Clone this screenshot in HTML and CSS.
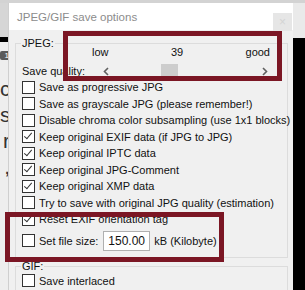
FILE: index.html
```html
<!DOCTYPE html>
<html lang="en">
<head>
    <meta charset="UTF-8">
    <title>JPEG/GIF save options</title>
    <link rel="stylesheet" href="styles.css">
</head>
<body>
    <div class="screen">
        <div class="topline"></div>
        <div class="row">
            <div class="behind-left">
                <div class="bl-top"></div>
                <div class="bl-bar"></div>
                <div class="bl-app">
                    <div class="badge">1</div>
                    <div class="big">c</div>
                    <div class="big">s</div>
                    <div class="big">r</div>
                    <div class="big">,</div>
                </div>
            </div>

            <div class="dialog">
                <div class="titlebar">
                    <span class="title">JPEG/GIF save options</span>
                    <span class="close">&#215;</span>
                </div>
                <div class="body">
                    <div class="group jpeg">
                        <span class="legend">JPEG:</span>
                        <div class="scale">
                            <span>low</span>
                            <span>39</span>
                            <span>good</span>
                        </div>
                        <div class="quality">
                            <span class="qlabel">Save quality:</span>
                            <div class="scrollbar">
                                <span class="arrow">
                                    <svg width="6" height="9" viewBox="0 0 6 9"><path d="M5 1 L1.5 4.5 L5 8" fill="none" stroke="#606060" stroke-width="1.6"/></svg>
                                </span>
                                <div class="track"><div class="thumb"></div></div>
                                <span class="arrow">
                                    <svg width="6" height="9" viewBox="0 0 6 9"><path d="M1 1 L4.5 4.5 L1 8" fill="none" stroke="#606060" stroke-width="1.6"/></svg>
                                </span>
                            </div>
                        </div>
                        <label class="check"><span class="box"></span>Save as progressive JPG</label>
                        <label class="check"><span class="box"></span>Save as grayscale JPG (please remember!)</label>
                        <label class="check"><span class="box"></span>Disable chroma color subsampling (use 1x1 blocks)</label>
                        <label class="check"><span class="box on"></span>Keep original EXIF data (if JPG to JPG)</label>
                        <label class="check"><span class="box on"></span>Keep original IPTC data</label>
                        <label class="check"><span class="box on"></span>Keep original JPG-Comment</label>
                        <label class="check"><span class="box on"></span>Keep original XMP data</label>
                        <label class="check"><span class="box"></span>Try to save with original JPG quality (estimation)</label>
                        <label class="check"><span class="box on"></span>Reset EXIF orientation tag</label>
                        <div class="check filesize">
                            <span class="box"></span>Set file size:
                            <span class="input">150.00</span>
                            kB (Kilobyte)
                        </div>
                    </div>
                    <div class="group gif">
                        <span class="legend">GIF:</span>
                        <label class="check"><span class="box"></span>Save interlaced</label>
                    </div>
                </div>
            </div>

            <div class="behind-right">
                <div class="br-top"></div>
                <div class="br-dark"></div>
            </div>
        </div>

        <!-- annotation marks -->
        <div class="mark mark-slider"></div>
        <div class="mark mark-size"></div>
    </div>
</body>
</html>
```

FILE: styles.css
```css
body {
    margin: 0;
    font-family: "Liberation Sans", Arial, sans-serif;
    font-size: 11px;
    color: #111;
    background: #000;
}
.screen {
    position: relative;
    width: 305px;
    height: 290px;
    overflow: hidden;
    display: flex;
    flex-direction: column;
}
.topline {
    height: 3px;
    background: #d3d3d3;
}
.row {
    flex: 1;
    display: flex;
    min-height: 0;
}

/* window behind the dialog */
.behind-left {
    width: 9px;
    display: flex;
    flex-direction: column;
    overflow: hidden;
}
.bl-top {
    height: 34px;
    background: #d6d6d6;
}
.bl-bar {
    height: 5px;
    background: #000;
}
.bl-app {
    flex: 1;
    background: #eeeeee;
    padding-top: 9px;
}
.badge {
    width: 9px;
    height: 9px;
    background: #5a5a5a;
    color: #fff;
    font-size: 8px;
    line-height: 9px;
    text-align: right;
    border-radius: 2px 0 0 2px;
    margin-bottom: 16px;
}
.big {
    font-size: 21px;
    line-height: 26px;
    color: #333;
    text-align: right;
    margin-right: -1px;
}

.behind-right {
    width: 12px;
    display: flex;
    flex-direction: column;
}
.br-top {
    height: 35px;
    background: #eaeaea;
}
.br-dark {
    flex: 1;
    background: #000;
}

/* dialog */
.dialog {
    width: 284px;
    background: #f0f0f0;
    display: flex;
    flex-direction: column;
    box-shadow: -1px 0 0 #cfcfcf;
}
.titlebar {
    height: 27px;
    background: #fff;
    display: flex;
    align-items: center;
    justify-content: space-between;
    padding-left: 8px;
}
.title {
    font-size: 11.5px;
    color: #8c8c8c;
}
.close {
    width: 19px;
    height: 18px;
    margin-top: 11px;
    margin-right: 1px;
    background: #e6e6e6;
    color: #d4d4d4;
    font-size: 12px;
    line-height: 18px;
    text-align: center;
}
.body {
    padding: 13px 5px 0 6px;
}
.group {
    position: relative;
    border: 1px solid #dcdcdc;
    padding: 2px 6px 6px 6px;
}
.legend {
    position: absolute;
    left: 5px;
    top: -8px;
    background: #f0f0f0;
    padding: 0 1px;
    line-height: 14px;
}
.scale {
    display: flex;
    justify-content: space-between;
    margin-left: 70px;
    width: 178px;
    height: 13px;
    line-height: 13px;
    margin-bottom: 4px;
}
.quality {
    display: flex;
    align-items: center;
    height: 16px;
}
.qlabel {
    width: 75px;
}
.scrollbar {
    display: flex;
    align-items: center;
    width: 176px;
    height: 16px;
    background: #f0f0f0;
}
.arrow {
    width: 17px;
    height: 16px;
    display: flex;
    align-items: center;
    justify-content: center;
}
.track {
    flex: 1;
    height: 16px;
    padding-left: 47px;
}
.thumb {
    width: 17px;
    height: 15px;
    margin-top: 1px;
    background: #cdcdcd;
}
.check {
    display: flex;
    align-items: center;
    height: 16.5px;
    white-space: nowrap;
}
.box {
    flex-shrink: 0;
    width: 11px;
    height: 11px;
    border: 1px solid #333;
    background: #fff;
    margin-right: 4px;
    position: relative;
}
.box.on::after {
    content: "";
    position: absolute;
    left: 3px;
    top: 0px;
    width: 3px;
    height: 7px;
    border: solid #333;
    border-width: 0 1px 1px 0;
    transform: rotate(40deg);
}
.filesize {
    height: 20px;
    margin-top: 3px;
}
.input {
    width: 41px;
    height: 18px;
    line-height: 18px;
    border: 1px solid #b0b0b0;
    background: #fff;
    padding-left: 4px;
    margin: 0 4px 0 5px;
    font-size: 12px;
}
.gif {
    margin-top: 8px;
    padding-top: 6px;
}

/* red annotation frames drawn over the screenshot */
.mark {
    position: absolute;
    border: 5px solid #7b1624;
    box-sizing: border-box;
}
.mark-slider {
    left: 63px;
    top: 31px;
    width: 219px;
    height: 50px;
}
.mark-size {
    left: 5px;
    top: 212px;
    width: 219px;
    height: 50px;
}
```
